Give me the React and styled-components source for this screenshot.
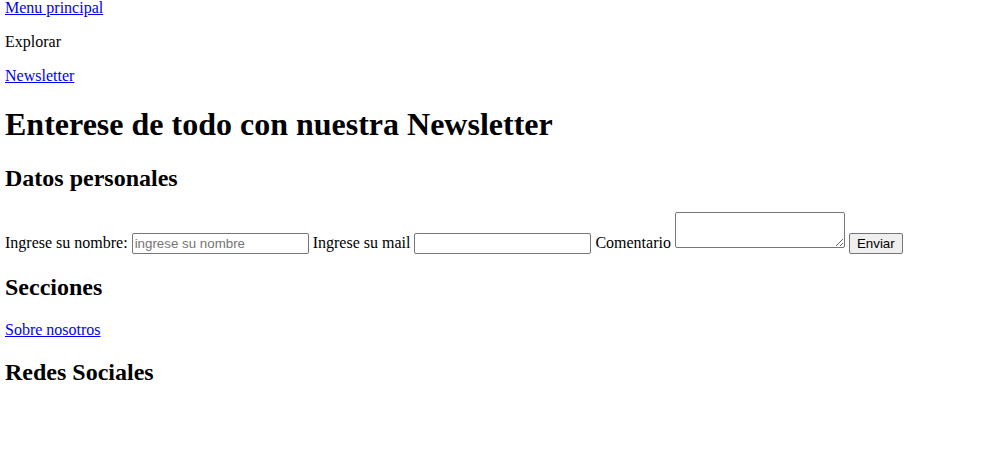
import styled, { createGlobalStyle } from "styled-components";

const GlobalStyle = createGlobalStyle`
  body {
    margin: 0;
    font-family: "Liberation Serif", "Times New Roman", serif;
    font-size: 16px;
    color: #000;
    background: #fff;
  }
`;

const Page = styled.div`
  padding: 0 5px;
  margin-top: -1px;
`;

const Nav = styled.nav`
  & > p:first-child {
    margin-top: 0;
  }
`;

const Para = styled.p`
  margin: 16px 0;
`;

const Link = styled.a`
  color: #0000ee;
  text-decoration: underline;
`;

const Title = styled.h1`
  font-size: 32px;
  margin: 21.44px 0;
  font-weight: bold;
`;

const SubTitle = styled.h2`
  font-size: 24px;
  margin: 19.92px 0;
  font-weight: bold;
`;

const Form = styled.form`
  margin: 0;
`;

const Label = styled.label`
  font-size: 16px;
`;

const TextInput = styled.input`
  box-sizing: border-box;
  width: 177px;
  height: 21px;
  padding: 1px 2px;
  border: 1px solid #767676;
  border-radius: 2px;
  font-family: "Liberation Sans", Arial, sans-serif;
  font-size: 13.33px;
  color: #000;
  background: #fff;

  &::placeholder {
    color: #757575;
  }
`;

const Area = styled.textarea`
  box-sizing: border-box;
  width: 170px;
  height: 36px;
  padding: 2px;
  border: 1px solid #767676;
  border-radius: 2px;
  font-family: "Liberation Mono", monospace;
  font-size: 13.33px;
  vertical-align: baseline;
`;

const Button = styled.button`
  box-sizing: border-box;
  height: 21px;
  padding: 1px 7px;
  border: 1px solid #767676;
  border-radius: 2px;
  background: #efefef;
  font-family: "Liberation Sans", Arial, sans-serif;
  font-size: 13.33px;
  color: #000;
`;

export default function App() {
  return (
    <>
      <GlobalStyle />
      <Page>
        <Nav>
          <Para>
            <Link href="#">Menu principal</Link>
          </Para>
          <Para>Explorar</Para>
          <Para>
            <Link href="#">Newsletter</Link>
          </Para>
        </Nav>
        <Title>Enterese de todo con nuestra Newsletter</Title>
        <SubTitle>Datos personales</SubTitle>
        <Form onSubmit={(e) => e.preventDefault()}>
          <Label htmlFor="nombre">Ingrese su nombre:</Label>{" "}
          <TextInput id="nombre" type="text" placeholder="ingrese su nombre" />{" "}
          <Label htmlFor="mail">Ingrese su mail</Label>{" "}
          <TextInput id="mail" type="email" />{" "}
          <Label htmlFor="comentario">Comentario</Label>{" "}
          <Area id="comentario" />{" "}
          <Button type="submit">Enviar</Button>
        </Form>
        <SubTitle>Secciones</SubTitle>
        <Para>
          <Link href="#">Sobre nosotros</Link>
        </Para>
        <SubTitle>Redes Sociales</SubTitle>
      </Page>
    </>
  );
}
